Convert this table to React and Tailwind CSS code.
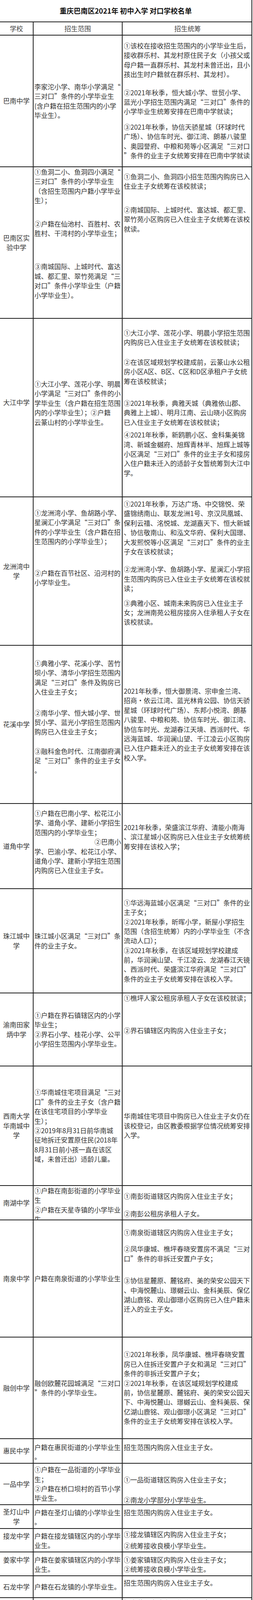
import React from "react";

// centred cell / cell with blocks placed by top margin
const C = (...l) => ({ c: true, b: [["", l]] });
const B = (...b) => ({ c: false, b });
const R = (t) => ({ t, right: true });

const ROWS = [
  {
    h: "h-[337px]",
    s: C("巴南中学"),
    r: C("李家沱小学、南华小学满足“", "三对口”条件的小学毕业生", "(含户籍在招生范围内的小学", "毕业生）。"),
    p: B(
      ["mt-[14px]", ["①该校在接收招生范围内的小学毕业生后，", "接收群乐村、其龙村原住民子女（小孩父或", "母户籍一直群乐村、其龙村未曾迁出，且小", "孩出生时户籍就在群乐村、其龙村）。"]],
      ["mt-[22px]", ["②2021年秋季，恒大城小学、世贸小学、", "蓝光小学招生范围内满足“三对口”条件的", "小学毕业生统筹安排在巴南中学就读；"]],
      ["mt-[15px]", ["③2021年秋季，协信天骄星城（环球时代", "广场）、协信车时光、御江湾、朗基八骏里", "、奥园誉府、中粮和苑等小区满足“三对口", "”条件的业主子女统筹安排在巴南中学就读"]]
    ),
  },
  {
    h: "h-[388px]",
    s: C("巴南区实", "验中学"),
    r: B(
      ["", ["①鱼洞二小、鱼洞四小满足“", "三对口”条件的小学毕业生", "（含招生范围内户籍小学毕业", "生）；"]],
      ["mt-[35px]", ["②户籍在仙池村、百胜村、农", "胜村、干湾村的小学毕业生；"]],
      ["mt-[61px]", ["③南城国际、上城时代、富达", "城、都汇里、翠竹苑满足“三", "对口”条件小学毕业生（户籍", "小学毕业生）。"]]
    ),
    p: B(
      ["mt-[12px]", ["①鱼洞二小、鱼洞四小招生范围内购房已入", "住业主子女统筹在该校就读；"]],
      ["mt-[36px]", ["②南城国际、上城时代、富达城、都汇里、", "翠竹苑小区购房已入住业主子女统筹在该校", "就读。"]]
    ),
  },
  {
    h: "h-[457px]",
    s: B(["mt-[202px]", ["大江中学"]]),
    r: B(["mt-[155px]", ["①大江小学、莲花小学、明晨", "小学满足“三对口”条件的小", "学毕业生（含户籍在招生范围", "内的小学毕业生）；②户籍", "云篆山村的小学毕业生。"]]),
    p: B(
      ["mt-[24px]", ["①大江小学、莲花小学、明晨小学招生范围", "内购房已入住业主子女统筹在该校就读；"]],
      ["mt-[26px]", ["②在该区域规划学校建成前，云篆山水公租", "房小区A区、B区、C区和D区承租户子女统", "筹在该校就读；"]],
      ["mt-[32px]", ["③2021年秋季，典雅天城（典雅依山郡、", "典雅上上城）、明月江南、云山晓小区购房", "已入住业主子女统筹在该校就读；"]],
      ["mt-[8px]", ["④2021年秋季，新鸥鹏小区、金科集美锦", "湾、新城金樾府、旭辉青林半、旭辉上城等", "小区满足“三对口”条件的业主子女和接房", "入住户籍未迁入的适龄子女暂统筹到大江中", "学。"]]
    ),
  },
  {
    h: "h-[380px]",
    s: C("龙洲湾中", "学"),
    r: B(
      ["mt-[28px]", ["①龙洲湾小学、鱼胡路小学、", "星澜汇小学满足“三对口”条", "件的小学毕业生（含户籍在招", "生范围内的小学毕业生）；"]],
      ["mt-[56px]", ["②户籍在百节社区、沿河村的", "小学毕业生。"]]
    ),
    p: B(
      ["mt-[5px]", ["①2021年秋季，万达广场、中交锦悦、荣", "盛锦绣南山、联发龙洲1号、京汉凤凰城、", "保利云禧、洺悦城、龙湖嘉天下、恒大新城", "、协信敬南山、和泓文华府、保利大国璟、", "大发熙悦等小区满足“三对口”条件的业主", "子女在该校就读；"]],
      ["mt-[21px]", ["②龙洲湾小学、鱼胡路小学、星澜汇小学招", "生范围内购房已入住业主子女统筹在该校就", "读；"]],
      ["mt-[13px]", ["③典雅小区、城南未来购房已入住业主子", "女；龙洲南苑公租房接房入住承租人子女在", "该校就读。"]]
    ),
  },
  {
    h: "h-[405px]",
    s: C("花溪中学"),
    r: B(
      ["mt-[33px]", ["①典雅小学、花溪小学、苦竹", "坝小学、清华小学招生范围内", "满足“三对口”条件及购房已", "入住业主子女；"]],
      ["mt-[29px]", ["②南华小学、恒大城小学、世", "贸小学、蓝光小学招生范围内", "购房已入住业主子女；"]],
      ["mt-[25px]", ["③融科金色时代、江南御府满", "足“三对口”条件的业主子女", "。"]]
    ),
    p: C("2021年秋季，恒大御景湾、宗申金兰湾、", "招商·依云江湾、蓝光林肯公园、协信天骄", "星城（环球时代广场）、东邦小悦湾、朗基", "八骏里、中粮和苑、协信车时光、御江湾、", "协信车时光、龙湖春江天境、西派时代、华", "远海蓝城、华润澜山望、千江凌云小区购房", "已入住户籍未迁入的业主子女统筹安排在该", "校入学。"),
  },
  {
    h: "h-[218px]",
    s: C("道角中学"),
    r: B(["mt-[12px]", ["①户籍在巴南小学、松花江小", "学、道角小学、建新小学招生", "范围内的小学毕业生；", R("②巴南小"), "学、巴渝小学、松花江小学、", "道角小学、建新小学招生范围", "内购房已入住业主子女。"]]),
    p: B(["mt-[48px]", ["2021年秋季，荣盛滨江华府、清能小南海", "、滨江星城小区购房已入住业主子女统筹统", "筹安排在该校入学；"]]),
  },
  {
    h: "h-[267px]",
    s: C("珠江城中", "学"),
    r: C("珠江城小区满足“三对口”条", "件的业主子女。"),
    p: C("①华远海蓝城小区满足“三对口”条件的业", "主子女；", "②2021年秋季，昕晖小学，新屋小学招生", "范围（含招生统筹）内的小学毕业生（不含", "流动人口）；", "③2021年秋季，在该区域规划学校建成", "前，华润澜山望、千江凌云、龙湖春江天镜", "、西派时代、荣盛滨江华府满足“三对口”", "条件的业主子女统筹安排在该校入学。"),
  },
  {
    h: "h-[187px]",
    s: C("渝南田家", "炳中学"),
    r: C("①户籍在界石镇辖区内的小学", "毕业生；", "②界石小学、桂花小学、公平", "小学招生范围内小学毕业生。"),
    p: B(["", ["①樵坪人家公租房承租人子女在该校就读；"]], ["mt-[59px]", ["②界石镇辖区内购房入住业主子女；"]]),
  },
  {
    h: "h-[306px]",
    s: C("西南大学", "华南城中", "学"),
    r: C("①华南城住宅项目满足“三对", "口”条件的业主子女（含户籍", "在该住宅项目的小学毕业", "生）；", "②2019年8月31日前华南城", "征地拆迁安置原住民(2018年", "8月31日前小孩一直在该区", "域，未曾迁出）适龄儿童。"),
    p: C("华南城住宅项目中购房已入住业主子女仍在", "该校登记，由区教委根据学位情况统筹安排", "入学。"),
  },
  {
    h: "h-[88px]",
    s: C("南湖中学"),
    r: B(["", ["①户籍在南彭街道的小学毕业", "生", "②户籍在天星寺镇的小学毕业", "生"]]),
    p: B(["mt-[14px]", ["①南彭街道辖区内购房入住业主子女；"]], ["mt-[21px]", ["②南彭公租房承租人子女。"]]),
  },
  {
    h: "h-[300px]",
    s: C("南泉中学"),
    r: C("户籍在南泉街道的小学毕业生"),
    p: B(
      ["mt-[19px]", ["①南泉街道辖区内购房入住业主子女；"]],
      ["mt-[18px]", ["②凤华康城、樵坪春晓安置房不满足“三对", "口”条件的非拆迁安置户子女；"]],
      ["mt-[32px]", ["③协信星麓原、麓铭府、美的荣安公园天下", "、中海悦麓山、璟樾云山、金科美辰、保亿", "湖山鹿铭、观山御璟小区购房已入住户籍未", "迁入的业主子女。"]]
    ),
  },
  {
    h: "h-[260px]",
    s: C("融创中学"),
    r: C("融创欧麓花园城满足“三对口", "”条件的小学毕业生。"),
    p: C("①2021年秋季，凤华康城、樵坪春晓安置", "房已入住拆迁安置户子女和满足“三对口”", "条件的非拆迁安置户子女；", "②2021年秋季，在该区域规划学校建成", "前，协信星麓原、麓铭府、美的荣安公园天", "下、中海悦麓山、璟樾云山、金科美辰、保", "亿湖山鹿铭、观山御璟小区满足“三对口”", "条件的业主子女统筹安排在该校入学。"),
  },
  {
    h: "h-[63px]",
    s: C("惠民中学"),
    r: B(["mt-[9px]", ["户籍在惠民街道的小学毕业生", "。"]]),
    p: B(["mt-[9px]", ["招生范围内购房入住业主子女。"]]),
  },
  {
    h: "h-[106px]",
    s: C("一品中学"),
    r: C("①户籍在一品街道的小学毕业", "生；", "②户籍在桥口坝村的百节小学", "毕业生。"),
    p: B(["mt-[29px]", ["①一品街道辖区购房入住业主子女；"]], ["mt-[28px]", ["②南龙小学部分小学毕业生。"]]),
  },
  {
    h: "h-[61px]",
    s: C("圣灯山中", "学"),
    r: B(["mt-[7px]", ["户籍在圣灯山镇的小学毕业生", "。"]]),
    p: B(["mt-[7px]", ["招生范围内购房入住业主子女。"]]),
  },
  {
    h: "h-[60px]",
    s: B(["mt-[6px]", ["接龙中学"]]),
    r: B(["mt-[6px]", ["户籍在接龙镇辖区内的小学毕", "业生。"]]),
    p: B(["mt-[2px]", ["①接龙镇辖区内购房入住业主子女；"]], ["mt-[5px]", ["②统筹接收良模小学毕业生。"]]),
  },
  {
    h: "h-[61px]",
    s: B(["mt-[7px]", ["姜家中学"]]),
    r: B(["mt-[7px]", ["户籍在姜家镇辖区内的小学毕", "业生。"]]),
    p: B(["mt-[7px]", ["①姜家镇辖区内购房入住业主子女；", "②统筹接收良模小学毕业生。"]]),
  },
  {
    h: "h-[56px]",
    s: C("石龙中学"),
    r: C("户籍在石龙镇的小学毕业生。"),
    p: B(["mt-[5px]", ["招生范围内购房入住业主子女。"]]),
  },
  {
    h: "h-[47px]",
    s: C("石滩中学"),
    r: C("户籍在石滩镇的小学毕业生。"),
    p: B(["", ["招生范围内购房入住业主子女。"]]),
  },
  {
    h: "h-[31px]",
    s: C("木洞中学"),
    r: C("户籍在木洞镇的小学毕业生。"),
    p: C("木洞镇辖区内购房入住业主子女。"),
  },
  {
    h: "h-[43px]",
    s: C("丰盛中学"),
    r: C("户籍在丰盛镇的小学毕业生。"),
    p: B(["mt-[1px]", ["招生范围内购房入住业主子女；"]]),
  },
  {
    h: "h-[30px]",
    s: C("慕禹中学"),
    r: C("户籍在双河口镇的小学毕业生"),
    p: C("招生范围内购房入住业主子女；"),
  },
  {
    h: "h-[30px]",
    s: C("麻柳中学"),
    r: C("户籍在麻柳嘴镇的小学毕业生"),
    p: C("招生范围内购房入住业主子女；"),
  },
  {
    h: "h-[134px]",
    s: C("南区学校"),
    r: C("鱼洞街道三江街、广义街、江", "丰街、石子坪410-426号满足", "“三对口”条件适龄儿童（含", "户籍在招生范围内的适龄儿", "童）。"),
    p: B(["mt-[29px]", ["南区学校招生范围内购房已入住业主子女统", "筹安排在该校入学。"]]),
  },
  {
    h: "h-[124px]",
    s: C("马王坪学", "校"),
    r: C("马王坪学校招生范围内满足“", "三对口”条件的小学毕业生", "（含户籍在招生范围内的小学", "毕业生）"),
    p: C("2021年秋季，该校招生范围内购房入住户", "籍未迁入的业主子女统筹在该校入学。"),
  },
  {
    h: "h-[33px]",
    s: C("安澜学校"),
    r: C("户籍在安澜镇的小学毕业生。"),
    p: C("招生范围内购房入住业主子女。"),
  },
  {
    h: "h-[34px]",
    s: C("二圣学校"),
    r: C("户籍在二圣镇的小学毕业生。"),
    p: C("招生范围内购房入住业主子女。"),
  },
  {
    h: "h-[33px]",
    s: C("东温学校"),
    r: C("户籍在东温泉镇的小学毕业生"),
    p: C("招生范围内购房入住业主子女。"),
  },
  {
    h: "h-[118px]",
    s: C("五布学校"),
    r: C("户籍在东温泉镇五布社区、玉", "滩村、狮子村、小桥村、河岸", "村的小学毕业生。"),
    p: B(["mt-[35px]", ["招生范围内购房入住业主子女。"]]),
  },
  {
    h: "h-[396px]",
    s: C("学堂湾学", "校"),
    r: C("申烨太阳城、蓝光水岸、远洋", "高尔夫、碧桂园天麓、宗申动", "力城、宗申青年国际、小泉别", "墅、汇立花溪湾小区满足“三", "对口”条件的业主子女。"),
    p: B(
      ["mt-[13px]", ["①2021年秋季，该校招生范围内购房入住", "户籍未迁入的适龄儿童统筹在该校入学；"]],
      ["mt-[13px]", ["②2021年秋季，旭辉城、荣信澜湾、阳光", "100阿尔勒、相思桥回龙小区、道角村渝南", "大道以东区域户籍小学毕业生在该校入学；"]],
      ["mt-[39px]", ["③2021年秋季，融科金色时代、斌鑫江南", "御府、中交景悦、万达广场、荣盛锦绣南山", "、联发龙洲1号、京汉凤凰城、保利云禧、", "龙湖嘉天下、洺悦城、协信敬南山、恒大新", "城、和泓文华府、保利大国璟、大发熙悦、", "相思桥回龙小区、道角村渝南大道以东区域", "购房入住户籍未迁入的适龄儿童统筹安排在", "该校入学。"]]
    ),
  },
  {
    h: "h-[51px]",
    s: C("特教学校"),
    r: C("巴南区户籍的聋哑及智障适龄", "儿童少年。"),
    p: C(),
  },
];

function Txt({ s }) {
  return s.split(/([“”])/).map((part, i) =>
    part === "“" || part === "”" ? (
      <span key={i} className="[font-feature-settings:'fwid']">
        {part}
      </span>
    ) : (
      part
    )
  );
}

function Line({ ln }) {
  const text = typeof ln === "string" ? ln : ln.t;
  const right = typeof ln !== "string" && ln.right;
  return (
    <div className={["h-[24.4px] whitespace-nowrap", right ? "text-right" : ""].join(" ")}>
      <Txt s={text} />
    </div>
  );
}

function Cell({ cell, className = "" }) {
  return (
    <div
      className={[
        "h-full min-h-0 overflow-hidden flex flex-col",
        cell.c ? "justify-center" : "",
        className,
      ].join(" ")}
    >
      {cell.b.map(([mt, lines], i) => (
        <div key={i} className={["shrink-0", mt].join(" ")}>
          {lines.map((ln, j) => (
            <Line key={j} ln={ln} />
          ))}
        </div>
      ))}
    </div>
  );
}

const COL1 = "w-[86px] shrink-0 border-r-2 border-[#1c1c1c] text-center";
const COL2 = "w-[228px] shrink-0 border-r-2 border-[#1c1c1c] pl-[2px] pr-[2px]";
const COL3 = "flex-1 min-w-0 pl-[3px]";

export default function App() {
  return (
    <div className="w-[648px] h-[5195px] overflow-hidden bg-white font-['Noto_Sans_CJK_SC',sans-serif] text-[17px] leading-[24.4px] text-[#333]">
      <div className="w-[646px] border-r-2 border-[#1c1c1c]">
        <div className="h-[57px] border-b-2 border-[#1c1c1c] flex items-center justify-center text-[18px] font-bold text-[#111]">
          重庆巴南区2021年 初中入学 对口学校名单
        </div>

        <div className="h-[34px] flex border-b-2 border-[#1c1c1c] text-[#444]">
          <div className={[COL1, "flex items-center justify-center"].join(" ")}>学校</div>
          <div className={[COL2, "flex items-center justify-center"].join(" ")}>招生范围</div>
          <div className={[COL3, "flex items-center justify-center"].join(" ")}>招生统筹</div>
        </div>

        {ROWS.map((row, i) => (
          <div key={i} className={["flex shrink-0 overflow-hidden border-b-2 border-[#1c1c1c]", row.h].join(" ")}>
            <Cell cell={row.s} className={COL1} />
            <Cell cell={row.r} className={COL2} />
            <Cell cell={row.p} className={COL3} />
          </div>
        ))}
      </div>
    </div>
  );
}
